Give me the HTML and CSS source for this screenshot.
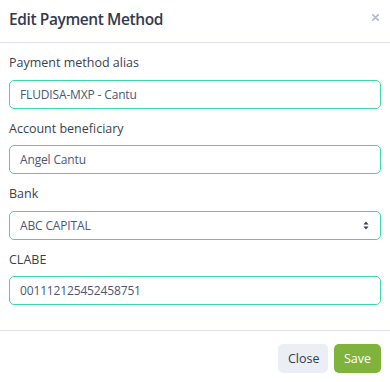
FILE: index.html
```html
<!DOCTYPE html>
<html lang="en">
<head>
<meta charset="utf-8">
<title>Edit Payment Method</title>
<link rel="stylesheet" href="styles.css">
</head>
<body>
<div class="modal">
  <div class="modal-header">
    <h5 class="modal-title">Edit Payment Method</h5>
    <button class="btn-close" type="button" aria-label="Close">
      <svg width="7" height="7" viewBox="0 0 7 7"><path d="M0.8 0.8L6.2 6.2M6.2 0.8L0.8 6.2" stroke="#b4bacb" stroke-width="1.7" stroke-linecap="round"/></svg>
    </button>
  </div>
  <div class="modal-body">
    <div class="form-group">
      <label class="form-label">Payment method alias</label>
      <div class="form-control">FLUDISA-MXP - Cantu</div>
    </div>
    <div class="form-group">
      <label class="form-label">Account beneficiary</label>
      <div class="form-control">Angel Cantu</div>
    </div>
    <div class="form-group">
      <label class="form-label">Bank</label>
      <div class="form-control form-select">
        <span>ABC CAPITAL</span>
        <svg class="select-arrow" width="6" height="9" viewBox="0 0 6 9"><path d="M3 0.5L5.6 3.6H0.4Z M3 8.5L5.6 5.4H0.4Z" fill="#3c4358"/></svg>
      </div>
    </div>
    <div class="form-group">
      <label class="form-label">CLABE</label>
      <div class="form-control">001112125452458751</div>
    </div>
  </div>
  <div class="modal-footer">
    <button class="btn btn-light" type="button">Close</button>
    <button class="btn btn-success" type="button">Save</button>
  </div>
</div>
</body>
</html>
```
FILE: styles.css
```css
html, body {
  margin: 0;
  padding: 0;
  background: #ffffff;
}
body {
  font-family: "Open Sans", "Noto Sans", sans-serif;
  color: #3b3f4c;
}
.modal {
  width: 390px;
  height: 382px;
  background: #ffffff;
  display: flex;
  flex-direction: column;
}
.modal-header {
  box-sizing: border-box;
  height: 44px;
  border-bottom: 1px solid #dfe2ec;
  display: flex;
  align-items: center;
  justify-content: space-between;
  padding: 0 10px 0 9px;
}
.modal-title {
  margin: -5px 0 0 0;
  font-size: 15.5px;
  font-weight: 600;
  letter-spacing: -0.4px;
  color: #343a4c;
  line-height: 20px;
}
.btn-close {
  border: 0;
  background: none;
  padding: 0;
  width: 10px;
  height: 10px;
  display: flex;
  align-items: center;
  justify-content: center;
  margin-top: -8px;
}
.modal-body {
  padding: 10px 9px 15px 9px;
}
.form-group {
  margin-bottom: 10px;
}
.form-label {
  display: block;
  font-size: 12.5px;
  line-height: 19.5px;
  margin-bottom: 7px;
  color: #3b3f4c;
}
.form-control {
  box-sizing: border-box;
  height: 29px;
  border: 1px solid #3dd9a0;
  border-radius: 5px;
  padding: 0 10px;
  font-size: 12px;
  letter-spacing: -0.15px;
  color: #4d5675;
  display: flex;
  align-items: center;
}
.form-select {
  justify-content: space-between;
  padding-right: 11px;
}
.modal-footer {
  border-top: 1px solid #dfe2ec;
  display: flex;
  justify-content: flex-end;
  gap: 6px;
  padding: 13px 9px 9px 9px;
}
.btn {
  height: 29px;
  border: 0;
  border-radius: 5px;
  font-family: "Open Sans", "Noto Sans", sans-serif;
  font-size: 12.5px;
  padding: 0 10px;
}
.btn-light {
  background: #eceef5;
  color: #343a4c;
  width: 50px;
}
.btn-success {
  background: #80b33c;
  color: #ffffff;
  width: 47px;
}
```
